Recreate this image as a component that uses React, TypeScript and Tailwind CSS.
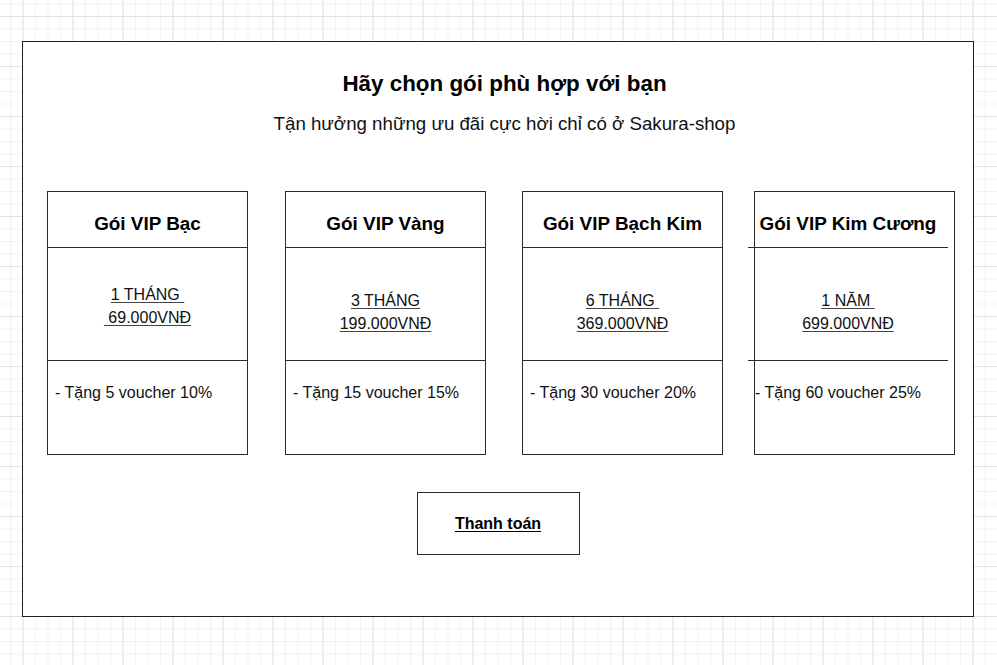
import React from 'react';

interface Plan {
  name: string;
  duration: string;
  price: string;
  perk: string;
  offset: string; // margin before the card
  priceTop: string;
  shifted?: boolean;
}

const plans: Plan[] = [
  {
    name: 'Gói VIP Bạc',
    duration: '1 THÁNG ',
    price: ' 69.000VNĐ',
    perk: '- Tặng 5 voucher 10%',
    offset: 'ml-[24px]',
    priceTop: 'pt-[4px]',
  },
  {
    name: 'Gói VIP Vàng',
    duration: '3 THÁNG',
    price: '199.000VNĐ',
    perk: '- Tặng 15 voucher 15%',
    offset: 'ml-[37px]',
    priceTop: 'pt-[16px]',
  },
  {
    name: 'Gói VIP Bạch Kim',
    duration: '6 THÁNG ',
    price: '369.000VNĐ',
    perk: '- Tặng 30 voucher 20%',
    offset: 'ml-[36px]',
    priceTop: 'pt-[16px]',
  },
  {
    name: 'Gói VIP Kim Cương',
    duration: '1 NĂM ',
    price: '699.000VNĐ',
    perk: '- Tặng 60 voucher 25%',
    offset: 'ml-[31px]',
    priceTop: 'pt-[16px]',
    shifted: true,
  },
];

function PlanCard({ plan }: { plan: Plan }) {
  return (
    <div className={`${plan.offset} w-[201px] h-[264px] shrink-0 border border-[#2b2b2b] bg-white`}>
      {/* inner column — the last card's content sits a few px to the left */}
      <div
        className={
          plan.shifted
            ? '-ml-[7px] w-[200px] h-full flex flex-col'
            : 'w-full h-full flex flex-col'
        }
      >
        {/* Header */}
        <div className="h-[56px] shrink-0 border-b border-[#2b2b2b] flex items-center justify-center pt-[9px]">
          <h3 className="text-[18.9px] font-bold text-black whitespace-nowrap">{plan.name}</h3>
        </div>

        {/* Price */}
        <div
          className={`h-[113px] shrink-0 border-b border-[#2b2b2b] flex flex-col items-center justify-center ${plan.priceTop} text-[16px] leading-[23px] text-[#111]`}
        >
          <span className="underline underline-offset-[2px] decoration-[#444] whitespace-pre">{plan.duration}</span>
          <span className="underline underline-offset-[2px] decoration-[#444] whitespace-pre">{plan.price}</span>
        </div>

        {/* Perks */}
        <div className="flex-1 pl-[7px] pt-[22px] text-[16px] leading-[20px] text-[#111]">
          {plan.perk}
        </div>
      </div>
    </div>
  );
}

export default function App() {
  return (
    <div
      className="w-[997px] h-[665px] overflow-hidden bg-white pl-[22px] pt-[41px] font-['Liberation_Sans',Arial,sans-serif] bg-[linear-gradient(#e2e2e2_1px,transparent_1px),linear-gradient(90deg,#e2e2e2_1px,transparent_1px),linear-gradient(#f2f2f2_1px,transparent_1px),linear-gradient(90deg,#f2f2f2_1px,transparent_1px)] [background-size:50px_50px,50px_50px,12.5px_12.5px,12.5px_12.5px] [background-position:22.5px_16px,22.5px_16px,22.5px_16px,22.5px_16px]"
    >
      <div className="w-[952px] h-[576px] border border-[#1f1f1f] bg-white flex flex-col">
        {/* Heading */}
        <h1 className="pt-[28px] pl-[13px] text-center text-[22.4px] leading-[28px] font-bold text-black">
          Hãy chọn gói phù hợp với bạn
        </h1>
        <p className="mt-[14px] pl-[13px] text-center text-[18.7px] leading-[24px] text-[#111]">
          Tận hưởng những ưu đãi cực hời chỉ có ở Sakura-shop
        </p>

        {/* Plans */}
        <div className="mt-[55px] flex">
          {plans.map((plan) => (
            <PlanCard key={plan.name} plan={plan} />
          ))}
        </div>

        {/* Checkout */}
        <div className="mt-[37px] flex justify-center">
          <button className="w-[163px] h-[63px] border border-[#2b2b2b] bg-white text-[16px] font-bold text-black underline underline-offset-[2px]">
            Thanh toán
          </button>
        </div>
      </div>
    </div>
  );
}
